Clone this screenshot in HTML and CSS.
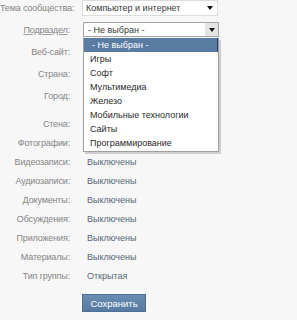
FILE: index.html
```html
<!DOCTYPE html>
<html>
<head>
<meta charset="utf-8">
<link rel="stylesheet" href="styles.css">
</head>
<body>
  <div id="settings">
    <div class="group group-top">
      <div class="row">
        <div class="label">Тема сообщества:</div>
        <div class="field">
          <div class="select select-light">
            <span class="select-text">Компьютер и интернет</span>
            <span class="arrow"></span>
          </div>
        </div>
      </div>
      <div class="row">
        <div class="label"><span class="link">Подраздел</span>:</div>
        <div class="field field-open">
          <div class="select select-open">
            <span class="select-text">- Не выбран -</span>
            <span class="arrow-btn"><span class="arrow"></span></span>
          </div>
          <ul class="dropdown">
            <li class="selected">- Не выбран -</li>
            <li>Игры</li>
            <li>Софт</li>
            <li>Мультимедиа</li>
            <li>Железо</li>
            <li>Мобильные технологии</li>
            <li>Сайты</li>
            <li>Программирование</li>
          </ul>
        </div>
      </div>
      <div class="row"><div class="label">Веб-сайт:</div></div>
      <div class="row"><div class="label">Страна:</div></div>
      <div class="row"><div class="label">Город:</div></div>
    </div>

    <div class="group group-bottom">
      <div class="row"><div class="label">Стена:</div></div>
      <div class="row"><div class="label">Фотографии:</div></div>
      <div class="row"><div class="label">Видеозаписи:</div><div class="value">Выключены</div></div>
      <div class="row"><div class="label">Аудиозаписи:</div><div class="value">Выключены</div></div>
      <div class="row"><div class="label">Документы:</div><div class="value">Выключены</div></div>
      <div class="row"><div class="label">Обсуждения:</div><div class="value">Выключены</div></div>
      <div class="row"><div class="label">Приложения:</div><div class="value">Выключены</div></div>
      <div class="row"><div class="label">Материалы:</div><div class="value">Выключены</div></div>
      <div class="row"><div class="label">Тип группы:</div><div class="value">Открытая</div></div>
    </div>

    <div class="actions">
      <button class="btn-save">Сохранить</button>
    </div>
  </div>
</body>
</html>
```

FILE: styles.css
```css
html, body {
  margin: 0;
  padding: 0;
  background-color: #f7f7f7;
  font-family: "Liberation Sans", Arial, sans-serif;
  font-size: 9px;
  color: #333;
}

#settings {
  width: 297px;
}

.group {
  display: flex;
  flex-direction: column;
}

.group-top {
  gap: 6px;
}

.group-bottom {
  margin-top: 12px;
  gap: 3px;
}

.row {
  display: flex;
  align-items: center;
  height: 16px;
  column-gap: 12px;
}

.label {
  width: 70px;
  flex: none;
  text-align: right;
  color: #858585;
  white-space: nowrap;
  letter-spacing: -0.15px;
}

.link {
  text-decoration: underline;
  text-decoration-color: #a0a0a0;
}

.value {
  padding-left: 5px;
  color: #55677a;
}

.field {
  position: relative;
}

.select {
  box-sizing: border-box;
  width: 136px;
  height: 16px;
  display: flex;
  align-items: center;
  background: #fff;
  color: #3a3a3a;
}

.select-light {
  border: 1px solid #dcdcdc;
  margin-top: -1px;
}

.select-open {
  margin-left: 1px;
  border: 1px solid #a4a4a4;
  height: 15px;
  margin-top: -1px;
}

.select-text {
  flex: 1;
  padding-left: 3px;
  white-space: nowrap;
  overflow: hidden;
}

.select-open .select-text {
  padding-left: 4px;
}

.arrow {
  display: block;
  width: 0;
  height: 0;
  border-left: 3px solid transparent;
  border-right: 3px solid transparent;
  border-top: 4px solid #111;
  margin-right: 4px;
}

.arrow-btn {
  width: 13px;
  height: 100%;
  background: #e4e4e4;
  display: flex;
  align-items: center;
  justify-content: center;
}

.arrow-btn .arrow {
  margin-right: 0;
}

.dropdown {
  position: absolute;
  top: 15px;
  left: 1px;
  width: 136px;
  box-sizing: border-box;
  margin: 0;
  padding: 0 0 1px;
  list-style: none;
  background: #fff;
  border: 1px solid #a0a0a0;
  border-top: none;
  box-shadow: 2px 2px 0 #cfcfcf;
  z-index: 5;
}

.dropdown li {
  height: 14px;
  line-height: 14px;
  padding-left: 6px;
  color: #2a2a2a;
  white-space: nowrap;
  overflow: hidden;
}

.dropdown li.selected {
  background: #5a7ca3;
  color: #fff;
  padding-left: 8px;
  box-shadow: inset -1px 0 0 #1e3f6b;
}

.actions {
  margin-top: 10px;
  padding-left: 82px;
}

.btn-save {
  width: 64px;
  height: 18px;
  padding: 0;
  border: 1px solid #4d6f96;
  background: linear-gradient(#6a8cb2, #567aa2);
  color: #fff;
  font-family: "Liberation Sans", Arial, sans-serif;
  font-size: 9.5px;
  box-shadow: 0 1px 0 #9fb3c9;
}
```
